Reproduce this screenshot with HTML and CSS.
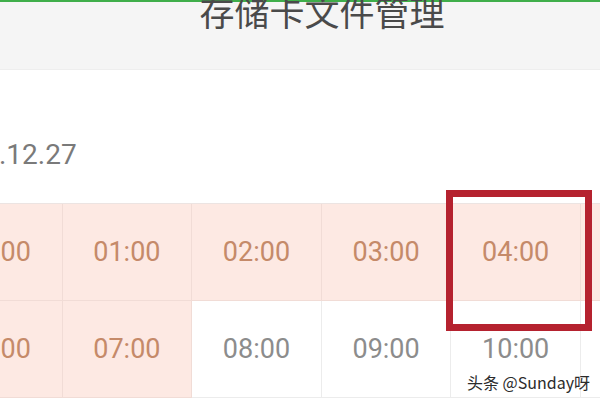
FILE: index.html
```html
<!DOCTYPE html>
<html lang="zh">
<head>
<meta charset="utf-8">
<link rel="stylesheet" href="styles.css">
</head>
<body>
<div class="screen">
  <header class="topbar">
    <h1 class="title">存储卡文件管理</h1>
  </header>
  <div class="content">
    <div class="date">2020.12.27</div>
    <div class="grid">
      <div class="cell on">00:00</div>
      <div class="cell on">01:00</div>
      <div class="cell on">02:00</div>
      <div class="cell on">03:00</div>
      <div class="cell on">04:00</div>
      <div class="cell on">05:00</div>
      <div class="cell on">06:00</div>
      <div class="cell on">07:00</div>
      <div class="cell">08:00</div>
      <div class="cell">09:00</div>
      <div class="cell">10:00</div>
      <div class="cell">11:00</div>
    </div>
  </div>
  <div class="highlight"></div>
  <div class="watermark">头条 @Sunday呀</div>
</div>
</body>
</html>
```
FILE: styles.css
```css
html, body {
  margin: 0;
  padding: 0;
  background: #ffffff;
}
.screen {
  position: relative;
  width: 600px;
  height: 400px;
  overflow: hidden;
  font-family: Roboto, "Noto Sans CJK SC", sans-serif;
}
.topbar {
  border-top: 2px solid #3fae4a;
  background: #f5f5f5;
  height: 70px;
  display: flex;
  justify-content: center;
  border-bottom: 1px solid #eeeeee;
  box-sizing: border-box;
}
.title {
  margin: -8px 0 0 0;
  font-family: "Noto Sans CJK SC", sans-serif;
  font-weight: 400;
  font-size: 35px;
  line-height: 34px;
  color: #4a4a4a;
  padding-left: 44px;
}
.content {
  margin-left: -67px;
  width: 800px;
}
.date {
  margin-top: 70px;
  padding-left: 3px;
  font-size: 28px;
  line-height: 30px;
  height: 30px;
  color: #7a7a7a;
}
.grid {
  margin-top: 33px;
  display: grid;
  grid-template-columns: repeat(6, 129.6px);
  grid-auto-rows: 97px;
  border-top: 1px solid #ece4e2;
}
.cell {
  display: flex;
  align-items: center;
  justify-content: center;
  font-size: 27px;
  color: #8c8c8c;
  border-right: 1px solid #ececec;
  border-bottom: 1px solid #ececec;
  box-sizing: border-box;
}
.cell.on {
  background: #fde9e3;
  color: #c58a69;
  border-color: #f1dcd6;
}
.highlight {
  position: absolute;
  left: 446px;
  top: 190px;
  width: 146px;
  height: 141px;
  border: 7px solid #b5222f;
  box-sizing: border-box;
}
.watermark {
  position: absolute;
  left: 467px;
  top: 370px;
  font-family: "Noto Sans CJK SC", sans-serif;
  font-size: 16px;
  line-height: 24px;
  color: #2b2b2b;
  text-shadow: 0 0 2px #ffffff;
}
```
